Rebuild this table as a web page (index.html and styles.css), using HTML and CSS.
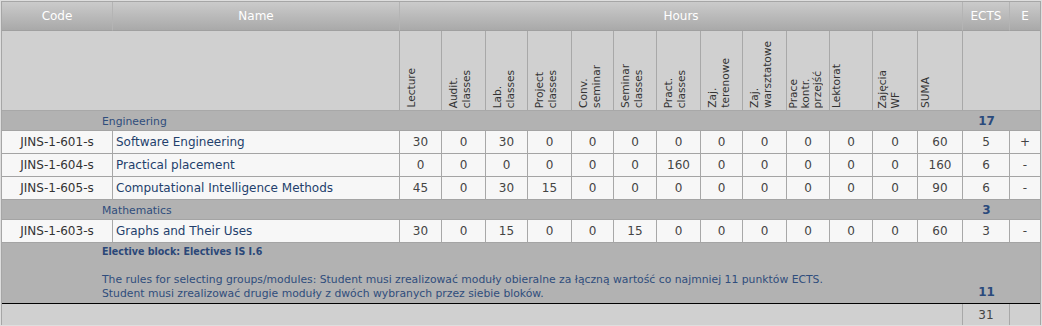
FILE: index.html
```html
<!DOCTYPE html>
<html lang="en">
<head>
<meta charset="utf-8">
<title>Programme</title>
<link rel="stylesheet" href="styles.css">
</head>
<body>
<div class="frame">
<div class="inner">
<table class="prog">
<colgroup>
<col class="c-code"><col class="c-name">
<col class="w42"><col class="w44"><col class="w42"><col class="w44"><col class="w42"><col class="w43"><col class="w44"><col class="w42"><col class="w44"><col class="w43"><col class="w43"><col class="w45"><col class="w45">
<col class="c-ects"><col class="c-e">
</colgroup>
<thead>
<tr class="h1">
<th>Code</th><th>Name</th><th colspan="13">Hours</th><th>ECTS</th><th class="last">E</th>
</tr>
<tr class="h2">
<td colspan="2" class="blank"></td>
<th><div class="rot">Lecture</div></th>
<th><div class="rot">Audit.<br>classes</div></th>
<th><div class="rot">Lab.<br>classes</div></th>
<th><div class="rot">Project<br>classes</div></th>
<th><div class="rot">Conv.<br>seminar</div></th>
<th><div class="rot">Seminar<br>classes</div></th>
<th><div class="rot">Pract.<br>classes</div></th>
<th><div class="rot">Zaj.<br>terenowe</div></th>
<th><div class="rot">Zaj.<br>warsztatowe</div></th>
<th class="p-tight"><div class="rot narrow">Prace<br>kontr.<br>przejść</div></th>
<th class="p-tight"><div class="rot">Lektorat</div></th>
<th class="p-mid"><div class="rot">Zajęcia<br>WF</div></th>
<th class="p-small"><div class="rot">SUMA</div></th>
<td colspan="2" class="blank last"></td>
</tr>
</thead>
<tbody>
<tr class="grp">
<td colspan="15" class="label">Engineering</td><td class="sum">17</td><td class="last"></td>
</tr>
<tr class="row">
<td class="code">JINS-1-601-s</td><td class="name">Software Engineering</td>
<td>30</td><td>0</td><td>30</td><td>0</td><td>0</td><td>0</td><td>0</td><td>0</td><td>0</td><td>0</td><td>0</td><td>0</td><td>60</td><td>5</td><td class="last">+</td>
</tr>
<tr class="row">
<td class="code">JINS-1-604-s</td><td class="name">Practical placement</td>
<td>0</td><td>0</td><td>0</td><td>0</td><td>0</td><td>0</td><td>160</td><td>0</td><td>0</td><td>0</td><td>0</td><td>0</td><td>160</td><td>6</td><td class="last">-</td>
</tr>
<tr class="row">
<td class="code">JINS-1-605-s</td><td class="name">Computational Intelligence Methods</td>
<td>45</td><td>0</td><td>30</td><td>15</td><td>0</td><td>0</td><td>0</td><td>0</td><td>0</td><td>0</td><td>0</td><td>0</td><td>90</td><td>6</td><td class="last">-</td>
</tr>
<tr class="grp">
<td colspan="15" class="label">Mathematics</td><td class="sum">3</td><td class="last"></td>
</tr>
<tr class="row">
<td class="code">JINS-1-603-s</td><td class="name">Graphs and Their Uses</td>
<td>30</td><td>0</td><td>15</td><td>0</td><td>0</td><td>15</td><td>0</td><td>0</td><td>0</td><td>0</td><td>0</td><td>0</td><td>60</td><td>3</td><td class="last">-</td>
</tr>
<tr class="elective">
<td colspan="15" class="label"><b>Elective block: Electives IS I.6</b><br><br>The rules for selecting groups/modules: Student musi zrealizować moduły obieralne za łączną wartość co najmniej 11 punktów ECTS.<br>Student musi zrealizować drugie moduły z dwóch wybranych przez siebie bloków.</td>
<td class="sum">11</td><td class="last"></td>
</tr>
<tr class="total">
<td colspan="15" class="span"></td><td class="tot">31</td><td class="last"></td>
</tr>
</tbody>
</table>
</div>
</div>
</body>
</html>
```
FILE: styles.css
```css
html, body {
  margin: 0;
  padding: 0;
  background: #ffffff;
}
.frame {
  width: 1040px;
  height: 324px;
  border: 1px solid #dedede;
}
.inner {
  width: 1038px;
  height: 322px;
  border: 1px solid #a6a6a6;
  background: #d0d0d0;
}
.prog {
  width: 1038px;
  table-layout: fixed;
  border-collapse: separate;
  border-spacing: 0;
  font-family: "DejaVu Sans", Verdana, sans-serif;
  font-size: 12px;
  color: #444;
}
.c-code { width: 111px; }
.c-name { width: 287px; }
.w42 { width: 42px; }
.w43 { width: 43px; }
.w44 { width: 44px; }
.w45 { width: 45px; }
.c-ects { width: 47px; }
.c-e { width: 30px; }

.prog th, .prog td {
  padding: 0;
  border-right: 1px solid #a8a8a8;
  border-bottom: 1px solid #a4a4a4;
}
.prog .last { border-right: none; }

.h1 { height: 29px; }
.h1 th {
  background: linear-gradient(#cbcbcb, #a9a9a9);
  color: #ffffff;
  font-weight: normal;
  font-size: 12px;
  text-align: center;
  vertical-align: middle;
  padding-bottom: 1px;
  border-right-color: #b4b4b4;
  border-bottom-color: #a0a0a0;
}

.h2 { height: 80px; }
.h2 th, .h2 td {
  background: #d0d0d0;
  vertical-align: bottom;
  text-align: left;
  line-height: 0;
  padding: 0 0 2px 5px;
  border-bottom-color: #a8a8a8;
}
.h2 td.blank { padding: 0; }
.h2 th.p-tight { padding-left: 0; }
.h2 th.p-mid { padding-left: 3px; }
.h2 th.p-small { padding-left: 1px; }
.rot {
  display: inline-block;
  writing-mode: vertical-rl;
  transform: rotate(180deg);
  font-size: 10.6px;
  line-height: 13px;
  font-weight: normal;
  color: #333;
  white-space: nowrap;
}
.rot.narrow { line-height: 12px; }

.grp { height: 20px; }
.grp td {
  background: #b2b2b2;
  border-right: none;
  border-bottom-color: #a4a4a4;
  vertical-align: middle;
  padding-top: 1px;
}
.grp .label {
  padding-left: 100px;
  font-size: 10.8px;
  color: #2f4d7c;
}
.grp .sum, .elective .sum {
  text-align: center;
  font-weight: bold;
  color: #2a4a7c;
}

.row { height: 23px; }
.row td {
  background: #f7f7f7;
  text-align: center;
  vertical-align: middle;
  color: #444;
}
.row td.code { color: #333; }
.row td.name {
  text-align: left;
  padding-left: 3px;
  color: #233f6c;
}

.elective { height: 59px; }
.elective td {
  background: #b2b2b2;
  border-right: none;
  border-bottom: 1px solid #000000;
}
.elective .label {
  padding: 1px 0 2px 100px;
  vertical-align: top;
  font-size: 10.8px;
  line-height: 14px;
  color: #2f4d7c;
}
.elective .label b {
  font-family: "DejaVu Sans Condensed", "DejaVu Sans", sans-serif;
  font-size: 10.6px;
  color: #2a4778;
}
.elective .sum {
  vertical-align: bottom;
  padding-bottom: 4px;
}

.total { height: 21px; }
.total td {
  background: #d0d0d0;
  border-bottom: none;
}
.total .tot {
  text-align: center;
  color: #444;
  font-size: 12px;
}
```
